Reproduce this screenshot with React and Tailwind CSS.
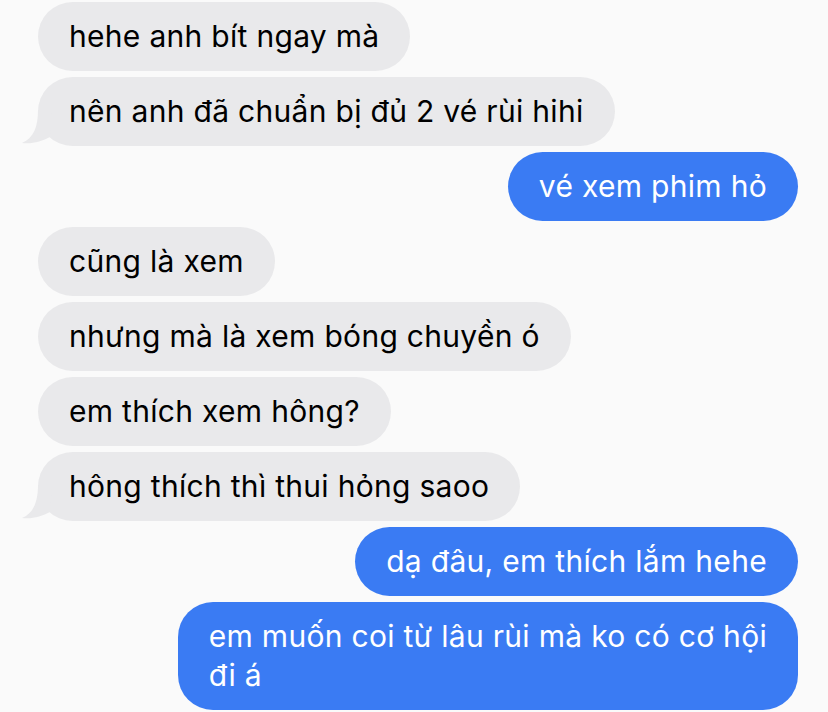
const messages = [
  { id: 1, from: "them", text: "hehe anh bít ngay mà" },
  { id: 2, from: "them", text: "nên anh đã chuẩn bị đủ 2 vé rùi hihi", tail: true },
  { id: 3, from: "me", text: "vé xem phim hỏ" },
  { id: 4, from: "them", text: "cũng là xem" },
  { id: 5, from: "them", text: "nhưng mà là xem bóng chuyền ó" },
  { id: 6, from: "them", text: "em thích xem hông?" },
  { id: 7, from: "them", text: "hông thích thì thui hỏng saoo", tail: true },
  { id: 8, from: "me", text: "dạ đâu, em thích lắm hehe" },
  { id: 9, from: "me", lines: ["em muốn coi từ lâu rùi mà ko có cơ hội", "đi á"] },
]

function Tail() {
  // little hook at the bottom-left of a received bubble
  return (
    <svg
      className="absolute left-[-16px] bottom-0 w-[30px] h-[36px]"
      viewBox="0 0 30 36"
      fill="#e9e9eb"
    >
      <path d="M16 0 C16 16 12 28 0 33 C10 34.5 20 31 28 27 L30 0 Z" />
    </svg>
  )
}

function Bubble({ msg }) {
  const mine = msg.from === "me"
  return (
    <div className={`flex ${mine ? "justify-end pr-[30px]" : "justify-start pl-[38px]"}`}>
      <div
        className={`relative px-[31px] py-[15px] text-[30px] leading-[39px] tracking-[0.3px] rounded-[35px] ${
          mine ? "bg-[#3a7bf3] text-white" : "bg-[#e9e9eb] text-black"
        }`}
      >
        {msg.tail && <Tail />}
        <span className="relative">
          {msg.lines
            ? msg.lines.map((l, i) => (
                <span key={i} className="block">{l}</span>
              ))
            : msg.text}
        </span>
      </div>
    </div>
  )
}

export default function App() {
  return (
    <div
      className="w-[828px] h-[712px] overflow-hidden bg-[#fafafa] pt-[2px] flex flex-col gap-[6px]"
      style={{ fontFamily: "Inter, 'Noto Sans', sans-serif" }}
    >
      {messages.map((m) => (
        <Bubble key={m.id} msg={m} />
      ))}
    </div>
  )
}
